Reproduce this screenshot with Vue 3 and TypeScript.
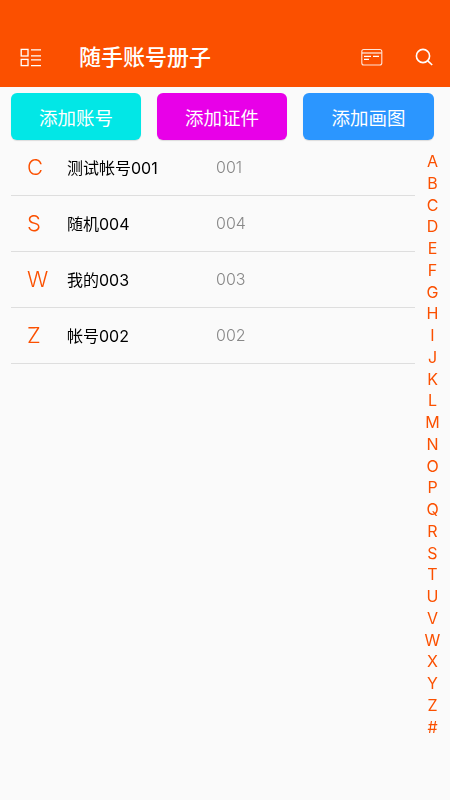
<script setup lang="ts">
const contacts = [
  { letter: 'C', name: '测试帐号001', code: '001' },
  { letter: 'S', name: '随机004', code: '004' },
  { letter: 'W', name: '我的003', code: '003' },
  { letter: 'Z', name: '帐号002', code: '002' },
]
const actions = [
  { label: '添加账号', cls: 'cyan' },
  { label: '添加证件', cls: 'magenta' },
  { label: '添加画图', cls: 'blue' },
]
const letters = 'ABCDEFGHIJKLMNOPQRSTUVWXYZ#'.split('')
</script>

<template>
  <div class="page">
    <header class="bar">
      <svg class="menu" width="22" height="20" viewBox="0 0 22 20" fill="none" stroke="#fff" stroke-width="1.3">
        <rect x="1.2" y="2.4" width="6.8" height="6.6" />
        <rect x="1.2" y="12.4" width="6.8" height="6.2" />
        <path d="M11 2.8H21M11 8.8H21M11 12.8H21M11 18.6H21" />
      </svg>
      <h1 class="title">随手账号册子</h1>
      <svg class="card" width="22" height="18" viewBox="0 0 22 18" fill="none" stroke="#fff">
        <rect x="0.8" y="1.5" width="20" height="15.5" rx="2" stroke-width="1.1" opacity=".85" />
        <path d="M1 5H20.5" stroke-width="1.1" />
        <path d="M3 8.4H10M12 8.4H18M3 11.4H8" stroke-width="1.1" />
      </svg>
      <svg class="search" width="18" height="18" viewBox="0 0 18 18" fill="none" stroke="#fff" stroke-width="1.6">
        <circle cx="8" cy="8" r="6.6" />
        <path d="M12.8 12.8L17.2 17" />
      </svg>
    </header>

    <div class="actions">
      <button v-for="a in actions" :key="a.label" class="action" :class="a.cls">{{ a.label }}</button>
    </div>

    <div class="content">
      <ul class="list">
        <li v-for="c in contacts" :key="c.letter" class="row">
          <span class="letter">{{ c.letter }}</span>
          <span class="name">{{ c.name }}</span>
          <span class="code">{{ c.code }}</span>
        </li>
      </ul>
      <nav class="index">
        <span v-for="l in letters" :key="l" class="idx">{{ l }}</span>
      </nav>
    </div>
  </div>
</template>

<style>
html, body { margin: 0; background: #fafafa; }
</style>

<style scoped>
.page {
  width: 450px;
  height: 800px;
  overflow: hidden;
  background: #fafafa;
  font-family: Inter, "Noto Sans CJK SC", sans-serif;
  display: flex;
  flex-direction: column;
}
.bar {
  height: 87px;
  box-sizing: border-box;
  background: #fb5000;
  padding: 27px 17px 0 20px;
  display: flex;
  align-items: center;
  flex: none;
}
.menu { flex: none; }
.title {
  margin: 0 0 0 37px;
  flex: 1;
  color: #fff;
  font-size: 22px;
  font-weight: 500;
  line-height: 30px;
}
.card { flex: none; margin-right: 32px; }
.search { flex: none; }
.actions {
  display: flex;
  justify-content: space-between;
  padding: 6px 16px 0 11px;
  flex: none;
}
.action {
  width: 130px;
  height: 47px;
  border: 0;
  border-radius: 6px;
  padding: 0;
  color: #fff;
  font: inherit;
  font-size: 18.5px;
  box-shadow: 0 1px 1px rgba(0, 0, 0, .12);
}
.cyan { background: #02e7e6; }
.magenta { background: #e800e8; }
.blue { background: #2b96ff; width: 131px; }
.content {
  flex: 1;
  display: flex;
  padding-left: 11px;
}
.list {
  list-style: none;
  margin: 0;
  padding: 0;
  width: 404px;
  flex: none;
  will-change: transform;
}
.row {
  height: 56px;
  padding-bottom: 1.5px;
  border-bottom: 1.5px solid #dedede;
  box-sizing: border-box;
  display: flex;
  align-items: center;
}
.letter {
  width: 56px;
  padding-left: 16px;
  box-sizing: border-box;
  color: #fb5000;
  font-size: 22px;
  font-weight: 300;
}
.name {
  width: 149px;
  color: #000;
  font-size: 16px;
}
.code {
  color: #888;
  font-size: 16px;
  font-weight: 300;
}
.index {
  flex: 1;
  display: flex;
  flex-direction: column;
  align-items: center;
  margin-top: 11px;
  will-change: transform;
}
.idx {
  height: 21.75px;
  line-height: 21.75px;
  color: #fb5000;
  font-size: 16px;
}
</style>
